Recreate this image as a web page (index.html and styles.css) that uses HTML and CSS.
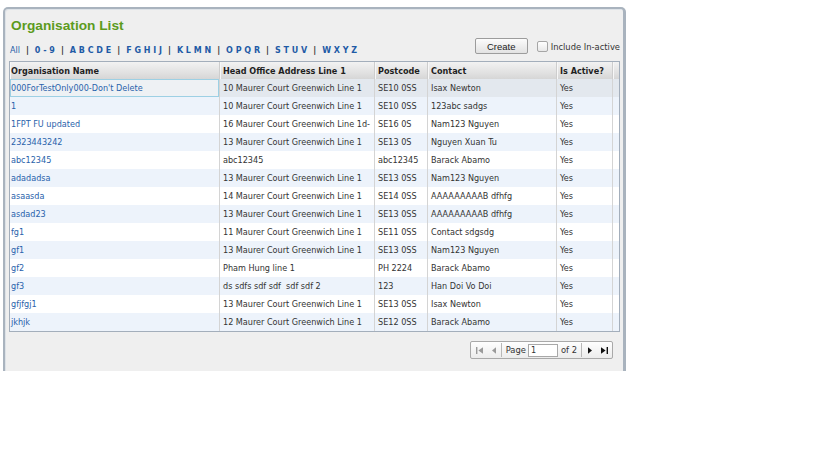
FILE: index.html
```html
<!DOCTYPE html>
<html lang="en">
<head>
<meta charset="utf-8">
<title>Organisation List</title>
<link rel="stylesheet" href="styles.css">
</head>
<body>
<div class="panel">
  <h1 class="title">Organisation List</h1>
  <div class="toolbar">
    <div class="alpha">
      <a class="all" href="#">All</a><span class="sep">|</span><a href="#">0 - 9</a><span class="sep">|</span><a href="#">A B C D E</a><span class="sep">|</span><a href="#">F G H I J</a><span class="sep">|</span><a href="#">K L M N</a><span class="sep">|</span><a href="#">O P Q R</a><span class="sep">|</span><a href="#">S T U V</a><span class="sep">|</span><a href="#">W X Y Z</a>
    </div>
    <div class="actions">
      <button class="btn" type="button">Create</button>
      <label class="inc"><input type="checkbox" class="chk"><span>Include In-active</span></label>
    </div>
  </div>
  <table class="grid">
    <thead>
      <tr>
        <th class="c1">Organisation Name</th>
        <th class="c2">Head Office Address Line 1</th>
        <th class="c3">Postcode</th>
        <th class="c4">Contact</th>
        <th class="c5">Is Active?</th>
        <th class="c6"></th>
      </tr>
    </thead>
    <tbody>
      <tr class="sel"><td class="c1 focus"><a href="#">000ForTestOnly000-Don't Delete</a></td><td>10 Maurer Court Greenwich Line 1</td><td>SE10 0SS</td><td>Isax Newton</td><td>Yes</td><td class="c6"></td></tr>
      <tr><td class="c1"><a href="#">1</a></td><td>10 Maurer Court Greenwich Line 1</td><td>SE10 0SS</td><td>123abc sadgs</td><td>Yes</td><td class="c6"></td></tr>
      <tr><td class="c1"><a href="#">1FPT FU updated</a></td><td>16 Maurer Court Greenwich Line 1d-</td><td>SE16 0S</td><td>Nam123 Nguyen</td><td>Yes</td><td class="c6"></td></tr>
      <tr><td class="c1"><a href="#">2323443242</a></td><td>13 Maurer Court Greenwich Line 1</td><td>SE13 0S</td><td>Nguyen Xuan Tu</td><td>Yes</td><td class="c6"></td></tr>
      <tr><td class="c1"><a href="#">abc12345</a></td><td>abc12345</td><td>abc12345</td><td>Barack Abamo</td><td>Yes</td><td class="c6"></td></tr>
      <tr><td class="c1"><a href="#">adadadsa</a></td><td>13 Maurer Court Greenwich Line 1</td><td>SE13 0SS</td><td>Nam123 Nguyen</td><td>Yes</td><td class="c6"></td></tr>
      <tr><td class="c1"><a href="#">asaasda</a></td><td>14 Maurer Court Greenwich Line 1</td><td>SE14 0SS</td><td>AAAAAAAAAB dfhfg</td><td>Yes</td><td class="c6"></td></tr>
      <tr><td class="c1"><a href="#">asdad23</a></td><td>13 Maurer Court Greenwich Line 1</td><td>SE13 0SS</td><td>AAAAAAAAAB dfhfg</td><td>Yes</td><td class="c6"></td></tr>
      <tr><td class="c1"><a href="#">fg1</a></td><td>11 Maurer Court Greenwich Line 1</td><td>SE11 0SS</td><td>Contact sdgsdg</td><td>Yes</td><td class="c6"></td></tr>
      <tr><td class="c1"><a href="#">gf1</a></td><td>13 Maurer Court Greenwich Line 1</td><td>SE13 0SS</td><td>Nam123 Nguyen</td><td>Yes</td><td class="c6"></td></tr>
      <tr><td class="c1"><a href="#">gf2</a></td><td>Pham Hung line 1</td><td>PH 2224</td><td>Barack Abamo</td><td>Yes</td><td class="c6"></td></tr>
      <tr><td class="c1"><a href="#">gf3</a></td><td>ds sdfs sdf sdf &nbsp;sdf sdf 2</td><td>123</td><td>Han Doi Vo Doi</td><td>Yes</td><td class="c6"></td></tr>
      <tr><td class="c1"><a href="#">gfjfgj1</a></td><td>13 Maurer Court Greenwich Line 1</td><td>SE13 0SS</td><td>Isax Newton</td><td>Yes</td><td class="c6"></td></tr>
      <tr><td class="c1"><a href="#">jkhjk</a></td><td>12 Maurer Court Greenwich Line 1</td><td>SE12 0SS</td><td>Barack Abamo</td><td>Yes</td><td class="c6"></td></tr>
    </tbody>
  </table>
  <div class="pager-row">
    <div class="pager">
      <svg class="pi first" width="7" height="7" viewBox="0 0 7 7"><rect x="0" y="0" width="1.4" height="7"/><path d="M7 0.3 L2.4 3.5 L7 6.7Z"/></svg>
      <svg class="pi prev" width="4" height="7" viewBox="0 0 4 7"><path d="M4 0.3 L0 3.5 L4 6.7Z"/></svg>
      <span class="psep"></span>
      <span class="ptext">Page</span>
      <input class="pinput" type="text" value="1">
      <span class="ptext of">of 2</span>
      <span class="psep"></span>
      <svg class="pi next" width="4" height="7" viewBox="0 0 4 7"><path d="M0 0.3 L4 3.5 L0 6.7Z"/></svg>
      <svg class="pi last" width="7" height="7" viewBox="0 0 7 7"><path d="M0 0.3 L4.6 3.5 L0 6.7Z"/><rect x="5.6" y="0" width="1.4" height="7"/></svg>
    </div>
  </div>
</div>
</body>
</html>
```
FILE: styles.css
```css
html, body {
  margin: 0;
  background: #ffffff;
}

body {
  font-family: "DejaVu Sans Condensed", "DejaVu Sans", sans-serif;
  font-stretch: condensed;
  font-size: 9px;
  color: #333333;
}

.panel {
  box-sizing: border-box;
  width: 623px;
  height: 364px;
  margin: 7px 0 0 3px;
  padding: 8px 3px 0 4px;
  background: #efefef;
  border: 2px solid #a9b3be;
  border-right-width: 3px;
  border-bottom: none;
  border-radius: 5px 5px 0 0;
  box-shadow: inset 1px 1px 0 #dde2e7;
}

.title {
  margin: 1px 0 0 0;
  padding-left: 2px;
  font-family: "Liberation Sans", Arial, sans-serif;
  font-stretch: normal;
  font-weight: bold;
  font-size: 13.7px;
  line-height: 16px;
  color: #5c9b1d;
}

.toolbar {
  display: flex;
  justify-content: space-between;
  height: 20px;
  margin-top: 2px;
}

.alpha {
  align-self: flex-end;
  padding-left: 1px;
  font-family: "DejaVu Sans", sans-serif;
  font-stretch: normal;
  font-weight: bold;
  font-size: 8px;
  line-height: 10px;
  white-space: nowrap;
}

.alpha a {
  color: #1f5ba6;
  text-decoration: none;
}

.alpha .all {
  font-weight: normal;
}

.sep {
  margin: 0 6px;
  color: #333333;
}

.actions {
  display: flex;
  align-items: center;
}

.btn {
  box-sizing: border-box;
  width: 53px;
  height: 16px;
  margin: 0;
  padding: 0;
  border: 1px solid #9c9c9c;
  border-radius: 2px;
  background: linear-gradient(#fcfcfc, #e2e2e2);
  font-family: "Liberation Sans", Arial, sans-serif;
  font-size: 9.5px;
  color: #222222;
}

.inc {
  display: flex;
  align-items: center;
  margin-left: 9px;
  color: #333333;
  font-size: 9.3px;
}

.chk {
  appearance: none;
  -webkit-appearance: none;
  box-sizing: border-box;
  width: 11px;
  height: 11px;
  margin: 0 3px 0 0;
  border: 1px solid #a6a6a6;
  border-radius: 2px;
  background: linear-gradient(#ffffff, #e8e8e8);
}

.grid {
  width: 611px;
  margin-top: 5px;
  table-layout: fixed;
  border-collapse: separate;
  border-spacing: 0;
  border: 1px solid #a3aebb;
  background: #ffffff;
}

.grid th,
.grid td {
  box-sizing: border-box;
  padding: 0 0 0 3px;
  text-align: left;
  white-space: nowrap;
  overflow: hidden;
}

.grid th {
  height: 17px;
  padding-top: 1px;
  line-height: 16px;
  font-weight: bold;
  color: #1f1f1f;
  background: linear-gradient(#f2f2f2, #e2e2e2 60%, #d6d6d6);
  border-right: 1px solid #cdcdcd;
  box-shadow: inset 1px 0 0 #f7f7f7;
}

.grid td {
  height: 18px;
  padding-top: 1px;
  line-height: 17px;
  border-right: 1px solid #d4d4d4;
}

.grid .c1 { width: 210px; padding-left: 1px; }
.grid .c2 { width: 155px; }
.grid .c3 { width: 53px; }
.grid .c4 { width: 129px; }
.grid .c5 { width: 56px; }
.grid .c6 { width: 6px; padding: 0; border-right: none; }

.grid tbody tr:nth-child(even) td {
  background: #edf3fb;
}

.grid tbody tr.sel td {
  background: #e3e8ee;
}

.grid tbody tr.sel td.focus {
  background: #eef1f4;
  box-shadow: inset 0 0 0 1px #9dd0e4;
}

.grid td a {
  color: #2962ab;
  text-decoration: none;
}

.pager-row {
  display: flex;
  justify-content: flex-end;
  margin-top: 9px;
  padding-right: 7px;
}

.pager {
  display: flex;
  align-items: center;
  box-sizing: border-box;
  height: 18px;
  padding: 0 4px 0 5px;
  border: 1px solid #a9a9a9;
  border-radius: 2px;
  background: linear-gradient(#fefefe, #ececec);
}

.pi { display: block; }
.first, .prev { fill: #9a9a9a; }
.next, .last { fill: #111111; }
.first { margin-right: 9px; }
.prev { margin-right: 5px; }
.next { margin-right: 9px; }

.psep {
  width: 1px;
  height: 14px;
  background: #b8b8b8;
  margin-right: 4px;
}

.of + .psep {
  margin-left: 4px;
  margin-right: 6px;
}

.ptext {
  color: #333333;
  font-size: 9.3px;
  line-height: 16px;
}

.pinput {
  box-sizing: border-box;
  width: 30px;
  height: 13px;
  margin: 0 3px 0 2px;
  padding: 0 0 0 2px;
  border: 1px solid #a8a8a8;
  background: #ffffff;
  font-family: inherit;
  font-size: 9px;
  color: #333333;
}
```
